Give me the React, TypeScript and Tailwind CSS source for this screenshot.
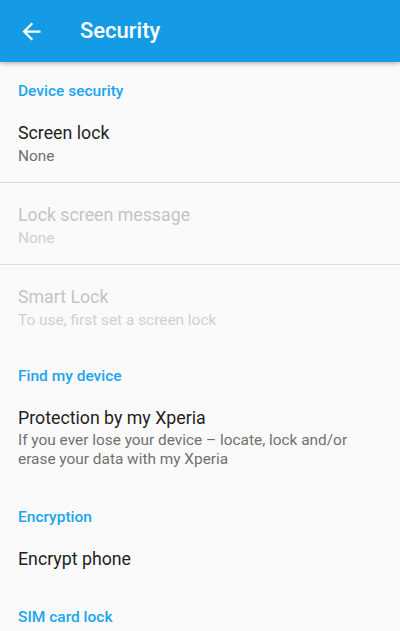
import React from "react";

const font = { fontFamily: "Roboto, 'Noto Sans', sans-serif" };

function Category({ label }: { label: string }) {
  return (
    <div className="h-[39px] pt-[19px] px-[18px] text-[15.5px] leading-[20px] font-medium text-[#1aa5f2]">
      {label}
    </div>
  );
}

function Item({
  title,
  summary,
  disabled,
  divider,
  pb = 17,
  lh = 20,
}: {
  title: string;
  summary?: string[];
  disabled?: boolean;
  divider?: boolean;
  pb?: number;
  lh?: number;
}) {
  return (
    <div
      className={`px-[18px] pt-[20px] ${divider ? "border-b border-[#dedede]" : ""}`}
      style={{ paddingBottom: divider ? pb - 1 : pb }}
    >
      <div
        className={`text-[17.75px] leading-[24px] ${disabled ? "text-[#c4c4c4]" : "text-[#1f1f1f]"}`}
      >
        {title}
      </div>
      {summary && (
        <div className="mt-[1px]">
          {summary.map((s, i) => (
            <div
              key={i}
              className={`text-[15.4px] ${disabled ? "text-[#d0d0d0]" : "text-[#707070]"}`}
              style={{ lineHeight: `${lh}px` }}
            >
              {s}
            </div>
          ))}
        </div>
      )}
    </div>
  );
}

export default function App() {
  return (
    <div className="w-[400px] h-[631px] overflow-hidden bg-[#fafafa] flex flex-col" style={font}>
      <div className="relative z-10 h-[62px] shrink-0 bg-[#159be6] flex items-center shadow-[0_2px_4px_rgba(0,0,0,0.25)]">
        <div className="w-[80px] flex items-center pl-[18px]">
          <svg width="27" height="27" viewBox="0 0 24 24" fill="#ffffff">
            <path d="M20 11H7.83l5.59-5.59L12 4l-8 8 8 8 1.41-1.41L7.83 13H20v-2z" />
          </svg>
        </div>
        <div className="text-white text-[22px] font-medium leading-[28px]">Security</div>
      </div>
      <Category label="Device security" />
      <Item title="Screen lock" summary={["None"]} divider />
      <Item title="Lock screen message" summary={["None"]} disabled divider />
      <Item title="Smart Lock" summary={["To use, first set a screen lock"]} disabled />
      <Category label="Find my device" />
      <Item
        title="Protection by my Xperia"
        summary={[
          "If you ever lose your device – locate, lock and/or",
          "erase your data with my Xperia",
        ]}
        lh={19}
        pb={19}
      />
      <Category label="Encryption" />
      <Item title="Encrypt phone" />
      <Category label="SIM card lock" />
    </div>
  );
}
